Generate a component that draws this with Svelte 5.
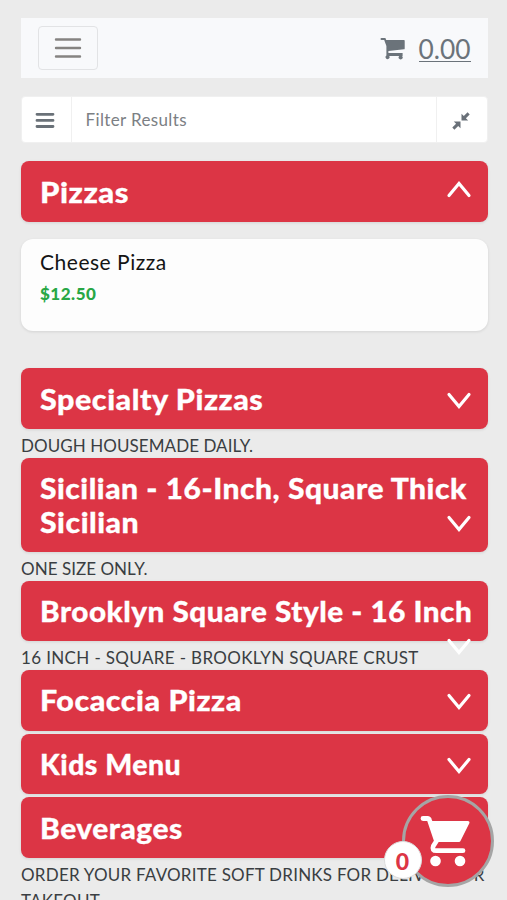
<script>
  const sections = [
    { lines: [['Specialty Pizzas', 1.088]], note: 'DOUGH HOUSEMADE DAILY.', gap: 0.07, arrow: 23 },
    { lines: [['Sicilian - 16-Inch, Square Thick', 1.07], ['Sicilian', 1.077]], note: 'ONE SIZE ONLY.', gap: 0.03, arrow: 56.5 },
    { lines: [['Brooklyn Square Style - 16 Inch', 1.058]], note: '16 INCH - SQUARE - BROOKLYN SQUARE CRUST', gap: 0.36, arrow: 56 },
    { lines: [['Focaccia Pizza', 1.086]], arrow: 22.5 },
    { lines: [['Kids Menu', 1.014]], arrow: 22.5 },
    { lines: [['Beverages', 1.068]], note: 'ORDER YOUR FAVORITE SOFT DRINKS FOR DELIVERY OR TAKEOUT.', gap: 0.23, arrow: 23 }
  ];
</script>

<div class="page">
  <nav>
    <button class="toggler" aria-label="Menu">
      <svg width="30" height="24" viewBox="0 0 30 24"><path d="M3 3.5H27M3 12H27M3 20.5H27" stroke="#858381" stroke-width="2.4" stroke-linecap="round" /></svg>
    </button>
    <div class="total">
      <svg width="26" height="22" viewBox="0 0 26 22" fill="#6b737a">
        <path d="M1.5 0H5.4L6.2 2H24Q24.7 2 24.7 2.8V10.4Q24.7 11.2 24 11.3L8.4 13V15H22.6V18H22A2 2 0 1 1 19.3 18H9.2A2 2 0 1 1 6.4 17.5V8L4.2 2H1.5Q.5 2 .5 1T1.5 0Z" />
      </svg>
      <span>0.00</span>
    </div>
  </nav>

  <div class="filter">
    <div class="addon left">
      <svg width="20" height="17" viewBox="0 0 20 17"><path d="M2 2.3H18M2 8.4H18M2 14.5H18" stroke="#6a7178" stroke-width="2.8" stroke-linecap="round" /></svg>
    </div>
    <div class="input">Filter Results</div>
    <div class="addon right">
      <svg width="18" height="18" viewBox="0 0 18 18" fill="#697078">
        <path d="M9.5 1.8V8.5H16.2L13.9 6.2L17.7 2.4L15.6 .3L11.8 4.1Z" />
        <path d="M8.5 16.2V9.5H1.8L4.1 11.8L.3 15.6L2.4 17.7L6.2 13.9Z" />
      </svg>
    </div>
  </div>

  <div class="bar first">
    <div class="line" style="transform: scaleX(1.107)">Pizzas</div>
    <svg class="arrow" style="top: 17.5px" width="26" height="20" viewBox="0 0 26 20"><path d="M3 16.5L13 4.5L23 16.5" /></svg>
  </div>

  <div class="card">
    <div class="name">Cheese Pizza</div>
    <div class="price">$12.50</div>
  </div>

  {#each sections as s}
    <div class="bar">
      {#each s.lines as [text, stretch]}
        <div class="line" style="transform: scaleX({stretch})">{text}</div>
      {/each}
      <svg class="arrow" style="top: {s.arrow}px" width="26" height="20" viewBox="0 0 26 20"><path d="M3 3.5L13 15.5L23 3.5" /></svg>
    </div>
    {#if s.note}<div class="note" style="letter-spacing: {s.gap}px">{s.note}</div>{/if}
  {/each}

  <div class="fab">
    <svg width="52" height="54" viewBox="0 0 52 54" fill="none" stroke="#fff" stroke-linecap="round" stroke-linejoin="round">
      <path d="M4 3.5H8.5Q10 3.5 10.6 5.5L17.5 26L14.3 31Q12.5 35.7 17.5 35.7H44" stroke-width="4.8" />
      <path d="M11.5 7.5H49L40 25.5H17.5Z" fill="#fff" stroke-width="3" />
      <circle cx="16.5" cy="46" r="5.3" fill="#fff" stroke="none" />
      <circle cx="41" cy="46" r="5.3" fill="#fff" stroke="none" />
    </svg>
    <div class="badge">0</div>
  </div>
</div>

<style>
  :global(body) { margin: 0; background: #ebebeb; }
  .page {
    box-sizing: border-box;
    height: 900px;
    overflow: hidden;
    position: relative;
    padding: 18px 19.5px 0 20.5px;
    font-family: Lato, "Open Sans", sans-serif;
    color: #3a3e42;
  }
  nav {
    box-sizing: border-box;
    height: 60px;
    background: #f8f9fb;
    display: flex;
    align-items: center;
    justify-content: space-between;
    padding: 0 17px;
  }
  .toggler {
    box-sizing: border-box;
    width: 60.5px;
    height: 44px;
    border: 1.5px solid #e2e3e5;
    border-radius: 4px;
    background: transparent;
    padding: 0;
    display: flex;
    align-items: center;
    justify-content: center;
  }
  .total { display: flex; align-items: center; gap: 12.5px; color: #6b737a; padding-top: 1.5px; }
  .total span {
    font-size: 26.3px;
    line-height: 24px;
    font-weight: 400;
    border-bottom: 1.5px solid #6b737a;
    padding-top: 1px;
  }
  .filter {
    margin-top: 18px;
    height: 47px;
    display: flex;
    background: #fff;
    border: 1px solid #f0f0f0;
    box-sizing: border-box;
    border-radius: 4px;
  }
  .addon { width: 50px; display: flex; align-items: center; justify-content: center; }
  .left { border-right: 1px solid #f0f0f0; padding: 1px 3px 0 0; box-sizing: border-box; }
  .right { border-left: 1px solid #f0f0f0; padding: 3px 1px 0 0; box-sizing: border-box; width: 51px; }
  .input { flex: 1; padding-left: 14px; font-size: 17px; line-height: 46px; letter-spacing: .37px; color: #7c8084; }
  .bar {
    box-sizing: border-box;
    position: relative;
    background: #dc3545;
    border-radius: 8px;
    padding: 14.5px 0 12.6px 19.5px;
    margin-bottom: 3px;
    box-shadow: 0 1px 3px rgba(0, 0, 0, .1);
  }
  .first { margin: 18px 0 17px; }
  .line {
    width: max-content;
    font-size: 28px;
    line-height: 33.7px;
    font-weight: 900;
    color: #fff;
    white-space: nowrap;
    letter-spacing: .5px;
    transform-origin: left;
    -webkit-text-stroke: .3px #fff;
  }
  .arrow { position: absolute; right: 15.5px; fill: none; stroke: #fff; stroke-width: 3.2; stroke-linecap: round; }
  .card {
    box-sizing: border-box;
    height: 92px;
    margin-bottom: 37.5px;
    padding: 9px 19.5px;
    border-radius: 12px;
    background: #fdfdfd;
    box-shadow: 0 1px 3px rgba(0, 0, 0, .1);
  }
  .name { font-size: 21px; line-height: 28px; letter-spacing: .52px; color: #141414; }
  .price { margin-top: 5px; font-size: 17px; line-height: 25px; letter-spacing: .5px; font-weight: 900; color: #28a745; }
  .note { position: relative; top: 1px; left: .5px; font-size: 17px; line-height: 25.5px; width: 478px; }
  .fab {
    position: absolute;
    left: 402px;
    top: 795px;
    box-sizing: border-box;
    width: 92px;
    height: 92px;
    border: 3.5px solid #a5a5a5;
    border-radius: 50%;
    background: #dc3545;
  }
  .fab svg { position: absolute; left: 14px; top: 17px; }
  .badge {
    position: absolute;
    left: -21.5px;
    top: 42.5px;
    width: 36px;
    height: 36px;
    border: 1.5px solid #ddd;
    border-radius: 50%;
    background: #fff;
    color: #dc3545;
    font-size: 23px;
    line-height: 38px;
    font-weight: 900;
    text-align: center;
  }
</style>
